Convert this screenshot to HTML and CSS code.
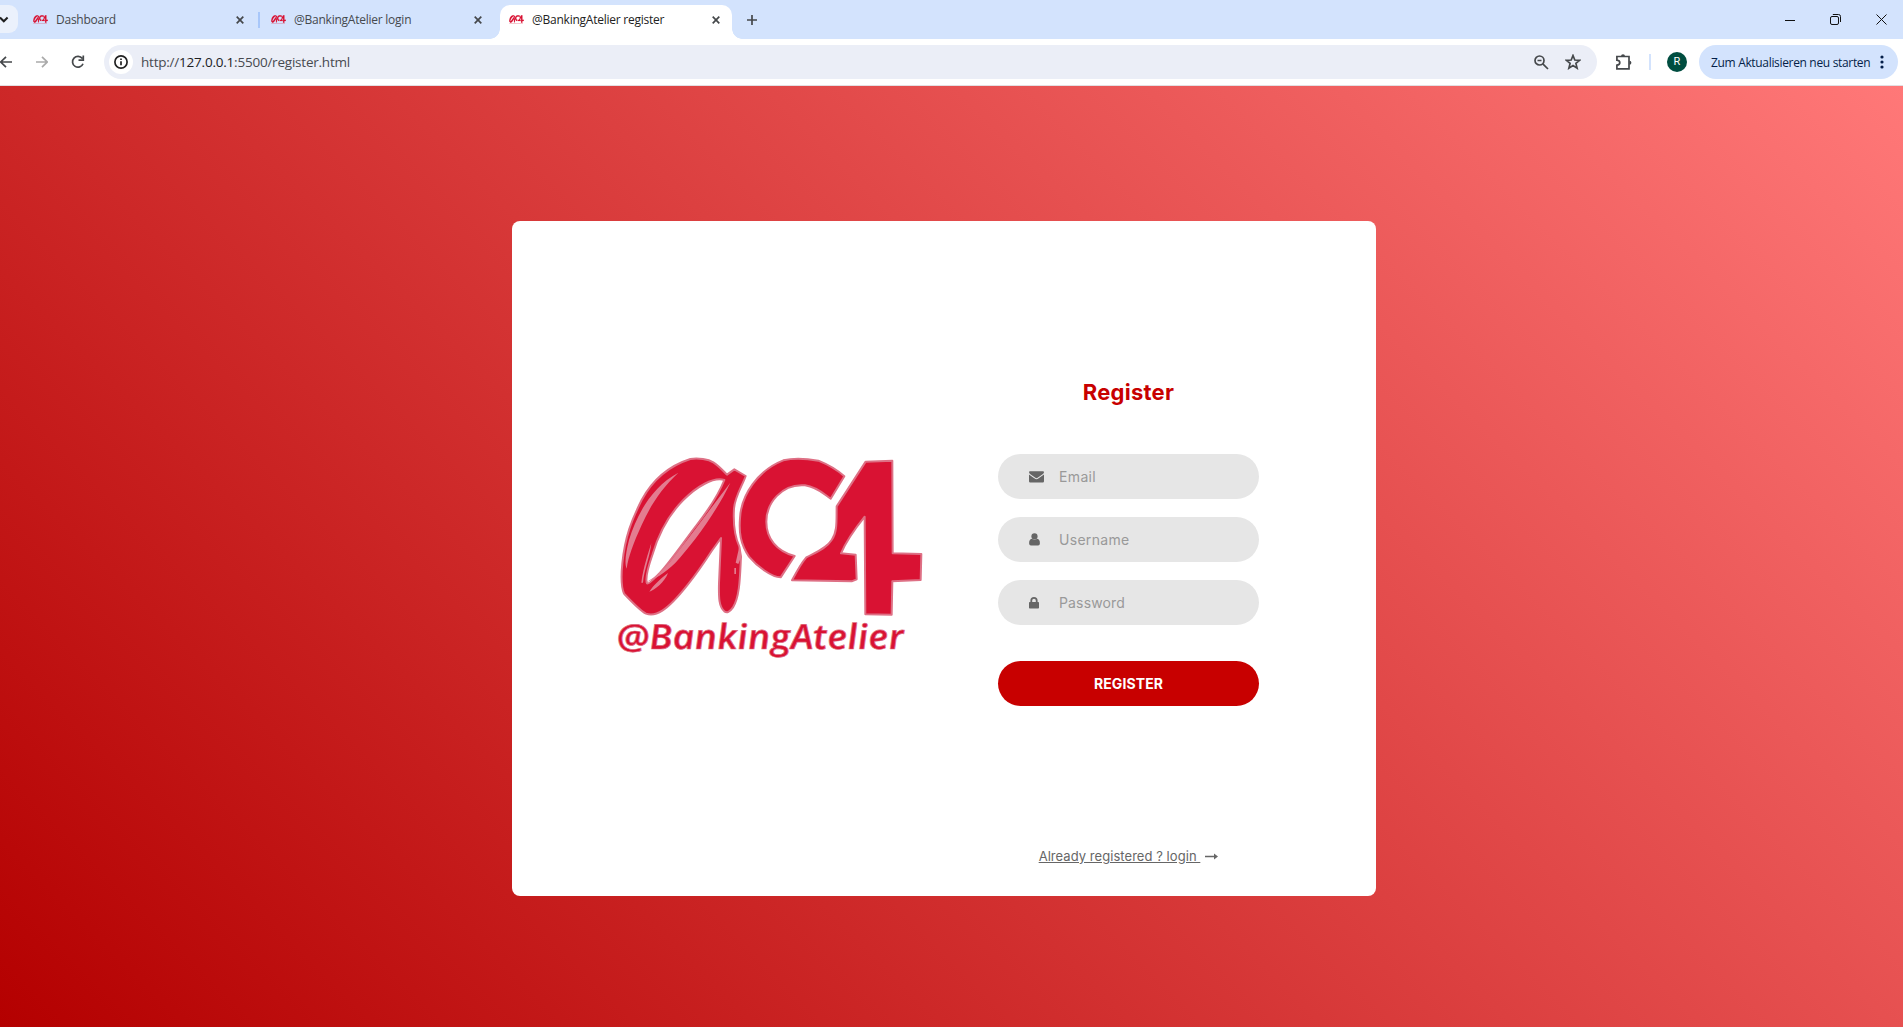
FILE: index.html
```html
<!DOCTYPE html>
<html lang="en">
<head>
<meta charset="utf-8">
<title>@BankingAtelier register</title>
<link rel="stylesheet" href="styles.css">
</head>
<body>
<svg class="defs" width="0" height="0" aria-hidden="true">
  <symbol id="mark" viewBox="35 45 925 490">
    <path fill-rule="evenodd" d="M256 57C280 53 310 58 325 67C342 78 354 92 366 104L388 88L422 108C412 138 391 165 387 205C384 255 390 292 403 320L408 350C405 405 405 470 384 502C374 516 366 520 358 514C342 500 341 475 342 430L348 294L320 333C280 395 215 485 172 512C152 525 138 526 123 521C105 512 75 480 57 461C48 440 48 410 52 370C60 290 80 240 110 180C145 115 200 75 256 57ZM358 120C325 110 275 140 235 180C185 230 158 290 142 345C128 385 120 415 126 430C134 433 150 412 165 398C200 360 240 300 275 255C310 210 340 165 358 120Z"/>
    <path d="M718 109L677 176C660 166 640 142 600 136C530 130 484 190 484 245C484 295 515 334 569 348L527 412C500 412 455 378 432 350C405 310 402 275 405 235C408 165 460 90 535 61C570 53 610 57 640 62C670 74 695 88 718 109Z"/>
    <path d="M782 65L862 62L863 340L949 342L947 420L862 424L860 524L781 523L779 230C755 260 725 300 708 340L752 344L755 418L740 424L561 421C572 400 590 368 604 352C630 338 665 325 680 300C698 275 694 240 695 199Z"/>
  </symbol>
</svg>

<header class="browser">
  <div class="tabs">
    <div class="tab-search"><svg width="18" height="28" viewBox="0 0 18 28"><path d="M0 12.5L3.8 16.3L7.6 12.5"/></svg></div>
    <div class="tab first"><svg class="fav" viewBox="35 45 925 560"><use href="#mark" x="35" y="45" width="925" height="490"/><path d="M50 575H900" stroke-width="30" opacity=".5"/></svg><span>Dashboard</span><svg class="x" viewBox="0 0 8 8"><path d="M.7 .7L7.3 7.3M7.3 .7L.7 7.3"/></svg></div>
    <i class="sep"></i>
    <div class="tab second"><svg class="fav" viewBox="35 45 925 560"><use href="#mark" x="35" y="45" width="925" height="490"/><path d="M50 575H900" stroke-width="30" opacity=".5"/></svg><span>@BankingAtelier login</span><svg class="x" viewBox="0 0 8 8"><path d="M.7 .7L7.3 7.3M7.3 .7L.7 7.3"/></svg></div>
    <div class="tab active"><svg class="fav" viewBox="35 45 925 560"><use href="#mark" x="35" y="45" width="925" height="490"/><path d="M50 575H900" stroke-width="30" opacity=".5"/></svg><span>@BankingAtelier register</span><svg class="x" viewBox="0 0 8 8"><path d="M.7 .7L7.3 7.3M7.3 .7L.7 7.3"/></svg></div>
    <svg class="plus" viewBox="0 0 10 10"><path d="M5 0V10M0 5H10"/></svg>
    <div class="window">
      <svg width="10" height="10" viewBox="0 0 10 10"><path d="M0 5.5H10"/></svg>
      <svg width="11" height="11" viewBox="0 0 11 11"><rect x=".5" y="2.5" width="8" height="8" rx="1.5"/><path d="M2.8 .5H8.5Q10.5 .5 10.5 2.5V8"/></svg>
      <svg width="11" height="11" viewBox="0 0 11 11"><path d="M.5 .5L10.5 10.5M10.5 .5L.5 10.5"/></svg>
    </div>
  </div>
  <div class="toolbar">
    <svg class="back" width="12" height="12" viewBox="0 0 12 12"><path d="M12 6H1M6 .8L.8 6L6 11.2"/></svg>
    <svg class="forward" width="12" height="12" viewBox="0 0 12 12"><path d="M0 6H11M6 .8L11.2 6L6 11.2"/></svg>
    <svg class="reload" width="14" height="14" viewBox="0 0 14 14"><path d="M11.3 3.6A5.4 5.4 0 1 0 12 8.7M12.3 .5V5.2H7.5"/></svg>
    <div class="address">
      <span class="info"><svg width="14" height="14" viewBox="0 0 14 14"><circle cx="7" cy="7" r="6.1"/><path d="M7 6.2V10.2M7 3.6V5"/></svg></span>
      <span class="url"><span>http://</span><b>127.0.0.1</b><span>:5500/register.html</span></span>
      <svg class="lens" width="15" height="15" viewBox="0 0 15 15"><circle cx="5.5" cy="5.5" r="4.5"/><path d="M3.5 5.5H7.5M8.8 8.8L14 14"/></svg>
      <svg class="star" width="16" height="16" viewBox="0 0 16 16"><path d="M8 1.5L9.8 6L14.6 6.3L10.9 9.4L12.1 14.1L8 11.5L3.9 14.1L5.1 9.4L1.4 6.3L6.2 6Z"/></svg>
    </div>
    <svg class="puzzle" width="18" height="18" viewBox="0 0 18 18"><path d="M1.9 3.5H14V15.9H1.9V12.2Q4.8 11.8 4.8 9.7Q4.8 7.6 1.9 7.2Z"/><path class="knob" d="M6 3.2A2 2 0 0 1 10 3.2ZM14.4 7.7A2 2 0 0 1 14.4 11.7Z"/></svg>
    <i class="divider"></i>
    <span class="avatar">R</span>
    <div class="update"><span>Zum Aktualisieren neu starten</span><svg width="4" height="14" viewBox="0 0 4 14"><circle cx="2" cy="2" r="1.6"/><circle cx="2" cy="7" r="1.6"/><circle cx="2" cy="12" r="1.6"/></svg></div>
  </div>
</header>

<main class="page">
  <section class="card">
    <svg class="logo" width="320" height="230" viewBox="0 0 960 690">
      <use href="#mark" x="35" y="45" width="925" height="490"/>
      <g class="shine">
        <path d="M220 98C165 150 135 200 110 255C85 310 70 350 65 386C58 370 62 340 72 300C95 225 140 140 220 98Z"/>
        <path d="M376 128C335 215 265 310 210 370C180 400 145 420 120 428C160 410 190 375 215 340C270 270 320 200 376 128Z"/>
        <path d="M139 309C130 340 115 380 109 428H114C117 390 135 350 139 309ZM189 399C172 412 145 435 133 455C150 450 180 425 189 399ZM404 315L409 350L400 372L392 368ZM388 384H393V402H388Z"/>
      </g>
      <text transform="translate(38 626) skewX(6)" textLength="862" lengthAdjust="spacingAndGlyphs">@BankingAtelier</text>
    </svg>
    <form class="form">
      <h1>Register</h1>
      <label class="field"><svg width="15" height="12" viewBox="0 0 15 12"><path d="M0 1Q0 .3 1 .3H14Q15 .3 15 1.2Q15 2.2 13.6 3.2L8.6 6.8Q7.5 7.6 6.4 6.8L1.4 3.2Q0 2.2 0 1ZM0 3.4Q3 5.6 5.7 7.6Q7.5 8.8 9.3 7.6L15 3.4V10.3Q15 11.5 13.8 11.5H1.2Q0 11.5 0 10.3Z"/></svg><span class="email">Email</span></label>
      <label class="field"><svg width="15" height="13" viewBox="0 0 15 13"><path d="M2.8 5.7Q0 6 .1 10.6Q.2 12.6 1.9 12.6H9.1Q10.8 12.6 10.9 10.6Q11 6 8.2 5.7Q5.5 7.9 2.8 5.7Z"/><circle cx="5.5" cy="3.4" r="3.1"/></svg><span class="username">Username</span></label>
      <label class="field"><svg width="15" height="12" viewBox="0 0 15 12"><path fill-rule="evenodd" d="M1.4 5V3.6A3.6 3.6 0 0 1 8.6 3.6V5H9.2Q10 5 10 5.8V10.8Q10 11.5 9.2 11.5H.8Q0 11.5 0 10.8V5.8Q0 5 .8 5ZM3.2 5H6.8V3.6A1.8 1.8 0 0 0 3.2 3.6Z"/></svg><span class="password">Password</span></label>
      <button type="button">REGISTER</button>
      <a class="login"><span>Already registered ? login&nbsp;</span><svg width="13" height="7" viewBox="0 0 13 7"><path d="M0 2.7H9V.4L13 3.5L9 6.6V4.3H0Z"/></svg></a>
    </form>
  </section>
</main>
</body>
</html>
```
FILE: styles.css
```css
* { box-sizing: border-box; }
body { margin: 0; height: 1027px; overflow: hidden; display: flex; flex-direction: column; font-family: "Open Sans", sans-serif; }
svg { display: block; flex: none; }
.defs { position: absolute; }
span { white-space: nowrap; }
.browser { height: 86px; flex: none; background: #fff; border-bottom: 1px solid #e3dfe2; }
.browser svg { fill: none; stroke: #45484b; stroke-width: 1.7; }
.tabs { height: 39px; display: flex; align-items: center; background: #d3e3fd; font-size: 12px; letter-spacing: -.24px; color: #45494e; }
.tab-search { width: 18px; height: 28px; margin-top: -1px; background: #ebf1fc; border-radius: 0 9px 9px 0; }
.browser .tab-search svg { stroke: #1f1f1f; stroke-width: 2; }
.tab { display: flex; align-items: center; }
.tab span { margin-left: 8px; line-height: 20px; }
.first { width: 240px; padding: 0 14px 0 15px; }
.second { width: 240px; padding: 0 18px 0 11px; }
.active { width: 232px; height: 34px; margin-top: 5px; padding: 0 12px 5px 9px; background: #fff; border-radius: 10px 10px 0 0; color: #222; position: relative; }
.active::before, .active::after { content: ""; position: absolute; bottom: 0; width: 10px; height: 10px; }
.active::before { left: -10px; background: radial-gradient(circle at 0 0, transparent 9.5px, #fff 10px); }
.active::after { right: -10px; background: radial-gradient(circle at 100% 0, transparent 9.5px, #fff 10px); }
.browser .fav { width: 15px; height: 11px; fill: #d91233; stroke: #d91233; stroke-width: 8; }
.browser .x { width: 8px; height: 8px; margin-left: auto; }
.sep { width: 2px; height: 16px; background: #a8c7fa; }
.browser .plus { width: 10px; height: 10px; margin-left: 15px; }
.window { display: flex; gap: 35px; margin-left: auto; margin-right: 16px; align-items: center; }
.browser .window svg { stroke: #111; stroke-width: 1; }
.toolbar { height: 46px; display: flex; align-items: center; }
.browser .forward { margin-left: 24px; stroke: #aaa; }
.reload { margin-left: 23px; }
.address { width: 1493px; height: 34px; margin-left: 19px; padding: 0 16px 0 5px; border-radius: 17px; background: #ebeef7; display: flex; align-items: center; }
.info { width: 24px; height: 24px; border-radius: 50%; background: #fff; display: grid; place-items: center; }
.browser .info svg { stroke: #222; }
.url { margin: 0 auto 0 8px; font-size: 13.5px; letter-spacing: -.22px; color: #474a50; }
.url b { font-weight: 400; color: #202124; }
.star { margin-left: 16px; }
.puzzle { margin-left: 18px; }
.browser .puzzle .knob { fill: #45484b; stroke: none; }
.divider { width: 2px; height: 16px; margin-left: 16px; background: #d3e3fd; }
.avatar { width: 20px; height: 20px; margin-left: 16px; border-radius: 50%; background: #004d40; color: #fff; font: 11px/20px Roboto, sans-serif; text-align: center; }
.update { width: 199px; height: 34px; margin-left: 12px; padding: 0 14px 0 12px; border-radius: 17px; background: #d3e3fd; display: flex; align-items: center; justify-content: space-between; font-size: 12px; letter-spacing: -.33px; color: #041e49; }
.browser .update svg { fill: #041e49; stroke: none; }
.page { flex: 1; display: grid; place-items: center; padding: 4px 15px 0 0; background: linear-gradient(-135deg, #ff7878, #b40000); }
.card { width: 864px; height: 675px; padding: 0 117px 0 93px; border-radius: 8px; background: #fff; display: flex; justify-content: space-between; }
.logo { margin-top: 219px; fill: #d91233; stroke: #de7085; stroke-width: 6; stroke-linejoin: round; }
.shine { fill: #e37c90; stroke: none; }
.logo text { font: italic 600 104px "Open Sans", sans-serif; stroke-width: 2; }
.form { width: 261px; display: flex; flex-direction: column; padding-top: 155px; font-family: Inter, sans-serif; }
h1 { margin: 0 0 45px; font-size: 22px; line-height: 33px; font-weight: 700; letter-spacing: .25px; color: #c80000; text-align: center; }
.field { height: 45px; margin-bottom: 18px; padding-left: 31px; border-radius: 23px; background: #e6e6e6; display: flex; align-items: center; gap: 15px; font-size: 14px; color: #999; }
.field svg { fill: #666; }
.email { letter-spacing: .35px; }
.username { letter-spacing: .3px; }
.password { letter-spacing: .15px; }
button { height: 45px; margin: 18px 0 0; padding: 0; border: 0; border-radius: 23px; background: #c80000; color: #fff; font: 700 14px Inter, sans-serif; letter-spacing: .1px; }
.login { height: 20px; margin-top: 140px; display: flex; align-items: center; justify-content: center; gap: 5px; font-size: 13px; letter-spacing: .05px; color: #666; }
.login span { text-decoration: underline; }
.login svg { fill: #666; }
```
